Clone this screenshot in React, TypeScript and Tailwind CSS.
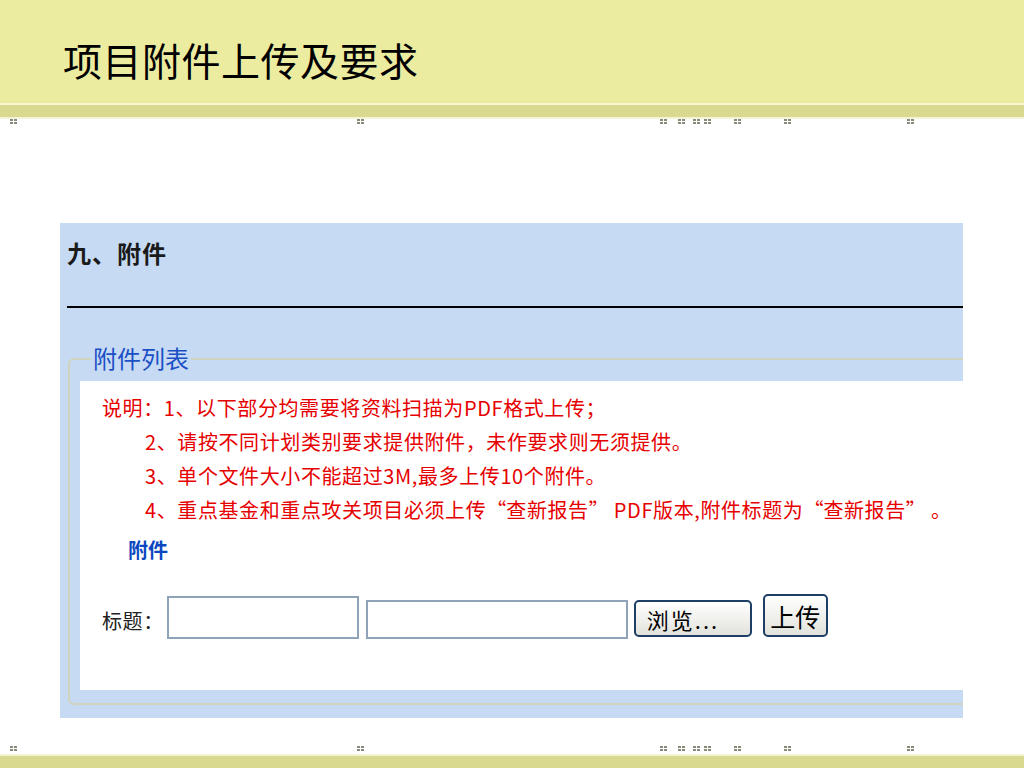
import React from "react";

const font = { fontFamily: '"Noto Sans CJK SC", "Noto Sans", sans-serif' };

// left offsets of the little 2x2 dot marks along the bands
const dotsLeft = [10, 357, 660, 678, 693, 704, 734, 784, 907];

function Dot({ left }: { left: number }) {
  return (
    <div className="absolute top-0 grid grid-cols-2 gap-[1px]" style={{ left }}>
      <span className="w-[3px] h-[2px] bg-[#8a8a7a]" />
      <span className="w-[3px] h-[2px] bg-[#8a8a7a]" />
      <span className="w-[3px] h-[2px] bg-[#8a8a7a]" />
      <span className="w-[3px] h-[2px] bg-[#8a8a7a]" />
    </div>
  );
}

function DotRow() {
  return (
    <div className="relative h-[8px]">
      {dotsLeft.map((l) => (
        <Dot key={l} left={l} />
      ))}
    </div>
  );
}

// full-width curly quotes, as the old bitmap font draws them
function Q({ children }: { children: React.ReactNode }) {
  return (
    <>
      <span className="inline-block w-[20px] text-right">“</span>
      {children}
      <span className="inline-block w-[20px] text-left">”</span>
    </>
  );
}

export default function App() {
  return (
    <div className="w-[1024px] h-[768px] flex flex-col bg-white overflow-hidden" style={font}>
      {/* slide header */}
      <div className="h-[103px] bg-[#ececa0] pl-[63px] pt-[40px]">
        <h1 className="text-[39px] leading-[39px] text-black font-normal tracking-[0.5px]">项目附件上传及要求</h1>
      </div>
      <div className="h-[2px] bg-[#f6f6d2]" />
      <div className="h-[12px] bg-[#d9d98f]" />
      <div className="h-[2px] bg-[#f4f4d8]" />
      <DotRow />

      {/* blue form panel */}
      <div className="mt-[96px] ml-[60px] w-[903px] h-[495px] bg-[#c6dbf3] overflow-hidden">
        <h2 className="pl-[7px] pt-[16px] text-[24px] leading-[28px] font-bold text-[#1a1a1a] tracking-[1px]">九、附件</h2>
        <div className="mt-[39px] ml-[7px] h-[2px] bg-black" />

        <div className="relative mt-[50px] ml-[8px] w-[960px] h-[347px] border-2 border-[#d0d4bf] rounded-[6px] pt-[21px] pl-[10px]">
          <span className="absolute left-[21px] -top-[16px] px-[2px] bg-[#c6dbf3] text-[24px] leading-[28px] text-[#1b4fc6]">
            附件列表
          </span>

          <div className="bg-white h-[309px] w-full pt-[10px]">
            <div className="text-[20px] leading-[34px] text-[#e60000] tracking-[0.6px]">
              <p className="pl-[22px]">说明：1、以下部分均需要将资料扫描为PDF格式上传；</p>
              <p className="pl-[65px]">2、请按不同计划类别要求提供附件，未作要求则无须提供。</p>
              <p className="pl-[65px]">3、单个文件大小不能超过3M,最多上传10个附件。</p>
              <p className="pl-[65px]">
                4、重点基金和重点攻关项目必须上传<Q>查新报告</Q> PDF版本,附件标题为<Q>查新报告</Q> 。
              </p>
            </div>
            <p className="mt-[6px] pl-[48px] text-[20px] leading-[34px] font-bold text-[#0b47c0]">附件</p>

            <div className="mt-[27px] pl-[22px] flex items-end">
              <span className="mb-[1px] text-[20px] leading-[34px] text-[#222] tracking-[0.6px]">标题：</span>
              <input className="ml-[3px] w-[192px] h-[43px] border-2 border-[#8ea2b8] bg-white outline-none" />
              <input className="ml-[7px] w-[262px] h-[39px] border-2 border-[#8ea2b8] bg-white outline-none" />
              <button className="ml-[6px] mb-[2px] w-[118px] h-[37px] border-2 border-[#1d3f66] rounded-[5px] bg-gradient-to-b from-white to-[#e2e2dc] text-[22px] leading-[30px] text-black text-left pl-[11px] tracking-[2px]">
                浏览...
              </button>
              <button className="ml-[11px] mb-[2px] w-[65px] h-[43px] border-2 border-[#1d3f66] rounded-[5px] bg-gradient-to-b from-white to-[#e2e2dc] text-[25px] leading-[34px] text-black">
                上传
              </button>
            </div>
          </div>
        </div>
      </div>

      {/* slide footer */}
      <div className="mt-auto">
        <DotRow />
        <div className="h-[2px] bg-[#f4f4d0]" />
        <div className="h-[12px] bg-[#d9d98f]" />
      </div>
    </div>
  );
}
